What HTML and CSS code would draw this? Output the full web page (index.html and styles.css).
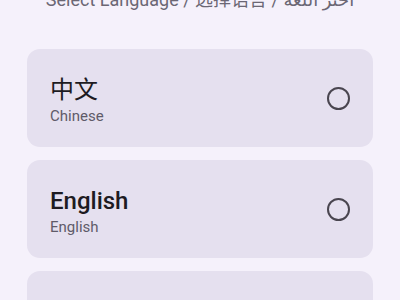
FILE: index.html
```html
<!DOCTYPE html>
<html lang="en">
<head>
    <meta charset="UTF-8">
    <meta name="viewport" content="width=device-width, initial-scale=1.0">
    <title>Select Language</title>
    <link rel="stylesheet" href="styles.css">
</head>
<body>
    <div class="screen">
        <div class="heading">Select Language / 选择语言 / اختر اللغة</div>
        <div class="list">
            <div class="option">
                <div class="labels">
                    <span class="native">中文</span>
                    <span class="english">Chinese</span>
                </div>
                <span class="radio"></span>
            </div>
            <div class="option">
                <div class="labels">
                    <span class="native">English</span>
                    <span class="english">English</span>
                </div>
                <span class="radio"></span>
            </div>
            <div class="option">
                <div class="labels">
                    <span class="native">العربية</span>
                    <span class="english">Arabic</span>
                </div>
                <span class="radio"></span>
            </div>
        </div>
    </div>
</body>
</html>
```

FILE: styles.css
```css
html, body {
    height: 100%;
}
body {
    margin: 0;
    padding: 0;
    background: #f5f1fb;
    font-family: Roboto, "Noto Sans CJK SC", "DejaVu Sans", sans-serif;
    overflow: hidden;
}
.screen {
    padding: 0 27px;
}
.heading {
    margin-top: -13px;
    text-align: center;
    font-size: 18px;
    line-height: 26px;
    color: #6b6774;
}
.list {
    margin-top: 36px;
    display: flex;
    flex-direction: column;
    gap: 13px;
}
.option {
    height: 98px;
    box-sizing: border-box;
    padding: 0 23px;
    background: #e5e0ef;
    border-radius: 13px;
    display: flex;
    align-items: center;
    justify-content: space-between;
}
.labels {
    display: flex;
    flex-direction: column;
    padding-top: 4px;
}
.native {
    font-size: 24px;
    line-height: 32px;
    font-weight: 500;
    color: #1d1b22;
}
.option:first-child .native {
    font-weight: 400;
}
.english {
    font-size: 15px;
    line-height: 20px;
    color: #5f5b69;
}
.radio {
    width: 19px;
    height: 19px;
    border: 2.3px solid #49454f;
    border-radius: 50%;
}
```
